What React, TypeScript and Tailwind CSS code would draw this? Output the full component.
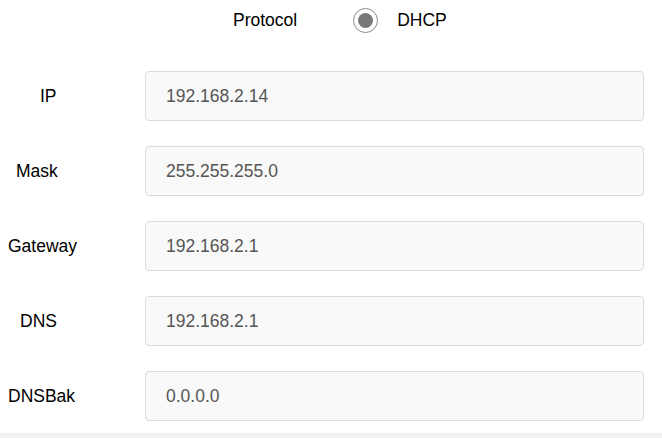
import React from "react";

const rows: { label: string; value: string; pl: string }[] = [
  { label: "IP", value: "192.168.2.14", pl: "pl-[40px]" },
  { label: "Mask", value: "255.255.255.0", pl: "pl-[16px]" },
  { label: "Gateway", value: "192.168.2.1", pl: "pl-[8px]" },
  { label: "DNS", value: "192.168.2.1", pl: "pl-[20px]" },
  { label: "DNSBak", value: "0.0.0.0", pl: "pl-[8px]" },
];

export default function App() {
  return (
    <div
      className="w-[662px] h-[438px] bg-white overflow-hidden text-[17.5px] text-black"
      style={{ fontFamily: '"Liberation Sans", Arial, sans-serif' }}
    >
      <div className="h-[41px] flex items-center pl-[233px]">
        <span>Protocol</span>
        <span className="ml-[56px] w-[25px] h-[25px] rounded-full border-[1.5px] border-[#8a8a8a] flex items-center justify-center bg-white">
          <span className="w-[15px] h-[15px] rounded-full bg-[#777777]" />
        </span>
        <span className="ml-[19px]">DHCP</span>
      </div>
      <div className="mt-[30px] flex flex-col gap-[25px]">
        {rows.map((r) => (
          <div key={r.label} className="flex items-center h-[50px]">
            <div className={`w-[145px] ${r.pl}`}>{r.label}</div>
            <div className="w-[499px] h-[50px] rounded-[4px] border border-[#dcdcdc] bg-[#f9f9f9] flex items-center pl-[20px] text-[#555555]">
              {r.value}
            </div>
          </div>
        ))}
      </div>
      <div className="mt-[12px] h-[10px] bg-[#f2f2f2]" />
    </div>
  );
}
